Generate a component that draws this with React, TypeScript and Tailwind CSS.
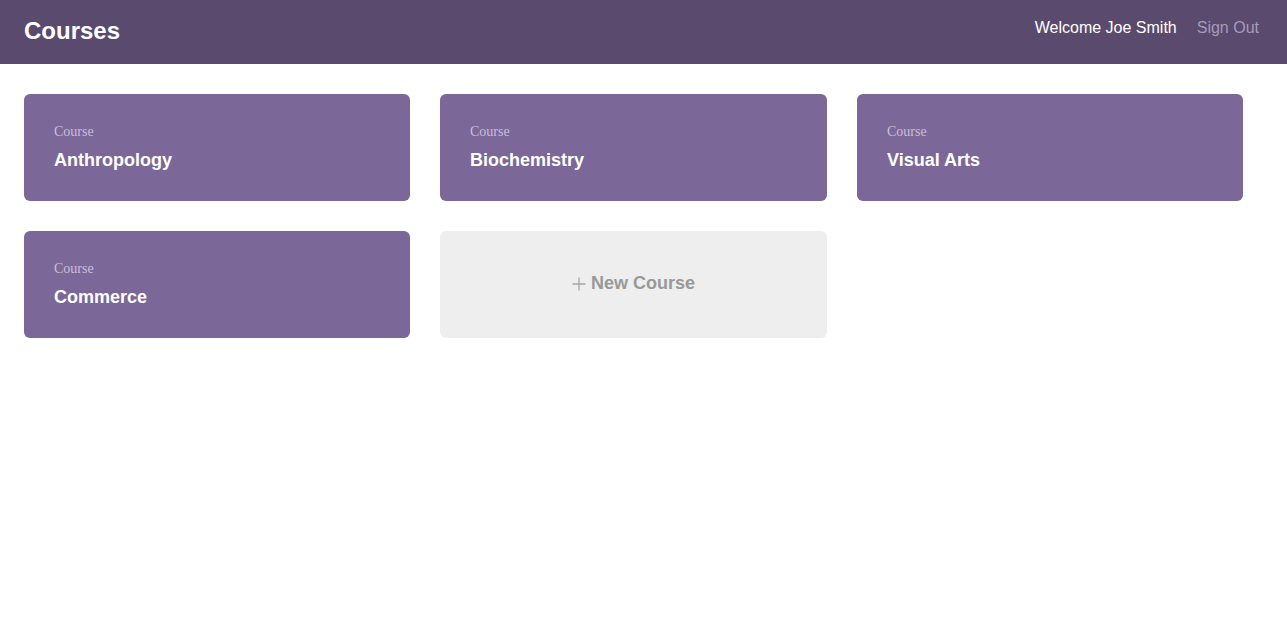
import React from "react";

const courses = ["Anthropology", "Biochemistry", "Visual Arts", "Commerce"];

export default function App() {
  return (
    <div className="min-h-screen bg-white" style={{ fontFamily: '"Liberation Sans", Arial, sans-serif' }}>
      <header className="h-16 bg-[#594a6e] flex items-center justify-between pl-6 pr-7">
        <h1 className="text-[24px] font-bold text-white leading-none -mt-[2px]">Courses</h1>
        <div className="flex items-center gap-5 text-[16px] -mt-[8px]">
          <span className="text-white">Welcome Joe Smith</span>
          <span className="text-[#a89bb8]">Sign Out</span>
        </div>
      </header>
      <main className="pt-[30px] pl-6 grid grid-cols-[386px_387px_386px] gap-x-[30px] gap-y-[30px]">
        {courses.map((c) => (
          <div key={c} className="bg-[#7b6899] rounded-md h-[107px] px-[30px] pt-[31px]">
            <div className="text-[14px] leading-[14px] text-[#c9bfd8]" style={{ fontFamily: '"Liberation Serif", serif' }}>
              Course
            </div>
            <div className="mt-[11px] text-[18px] leading-[21px] font-bold text-white">{c}</div>
          </div>
        ))}
        <div className="bg-[#eeeeee] rounded-md h-[107px] flex items-center justify-center">
          <span className="text-[18px] font-bold text-[#999999] flex items-center -mt-[2px]">
            <svg width="14" height="14" viewBox="0 0 14 14" className="mr-[5px]">
              <path d="M7 0.5V13.5M0.5 7H13.5" stroke="#a6a6a6" strokeWidth="1.3" fill="none" />
            </svg>
            New Course
          </span>
        </div>
      </main>
    </div>
  );
}
